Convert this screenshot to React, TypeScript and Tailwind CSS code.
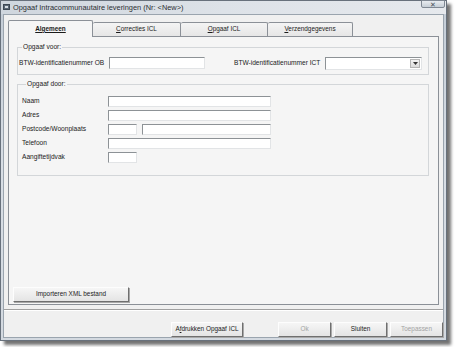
import React from "react";

const inputCls =
  "h-[11px] bg-white border border-t-[#8d9296] border-l-[#8d9296] border-b-[#e2e4e6] border-r-[#e2e4e6]";

function Btn({ w, label, disabled }: { w: string; label: React.ReactNode; disabled?: boolean }) {
  return (
    <div
      className={`${w} h-[15px] flex items-center justify-center bg-gradient-to-b from-[#f6f6f6] to-[#e4e4e4] border border-t-[#fdfdfd] border-l-[#fdfdfd] border-b-[#6f6f6f] border-r-[#6f6f6f] shadow-[1px_1px_0_#a9a9a9] text-[6.4px] leading-none ${
        disabled ? "text-[#a3a3a3]" : "text-[#1b1b1b]"
      }`}
    >
      {label}
    </div>
  );
}

function Row({ label, children }: { label: string; children: React.ReactNode }) {
  return (
    <div className="flex items-center h-[11px]">
      <div className="w-[86px] text-[6.6px] leading-none">{label}</div>
      {children}
    </div>
  );
}

export default function App() {
  return (
    <div className="w-[455px] h-[347px] bg-white font-['Liberation_Sans',Arial,sans-serif] text-[#1b1b1b]">
      <div className="w-[447px] h-[341px] flex flex-col bg-gradient-to-b from-[#c3ccd6] via-[#d8dee5] to-[#d3d9e0] border border-[#68717c] shadow-[4px_4px_3px_rgba(0,0,0,0.55)]">
        {/* title bar */}
        <div className="h-[13px] flex items-start pl-[2px] bg-gradient-to-r from-[#cfd6de] via-[#dde2e8] to-[#e6e9ed]">
          <div className="mt-[3px] w-[7px] h-[6px] bg-[#5d6a78] border border-[#3e4955] flex items-center justify-center">
            <div className="w-[3px] h-[2px] bg-[#d6dde4]" />
          </div>
          <div className="ml-[3px] mt-[3px] text-[7.4px] leading-none text-[#2b2f33]">
            Opgaaf Intracommunautaire leveringen (Nr: &lt;New&gt;)
          </div>
          <div className="flex-1" />
          <div className="mr-[1px] w-[24px] h-[8px] -mt-[1px] rounded-b-[2px] bg-gradient-to-b from-[#e8ecf0] to-[#c6ced6] border border-[#7f8893] flex items-center justify-center text-[7px] leading-none text-[#4a5159]">
            ✕
          </div>
        </div>
        {/* client */}
        <div className="flex-1 mx-[2px] mb-[2px] bg-[#f0f0f0] border border-[#9aa4ae] flex flex-col px-[4px] pt-[5px]">
          {/* tabs */}
          <div className="h-[16px] flex items-end text-[6.4px] leading-none">
            <div className="w-[85px] h-[17px] -mb-[1px] z-10 bg-[#f5f5f5] border border-b-0 border-[#8b9097] rounded-t-[2px] flex items-center justify-center font-bold">
              <span className="underline">Algemeen</span>
            </div>
            <div className="w-[88px] h-[14px] bg-gradient-to-b from-[#f4f4f4] to-[#e6e6e6] border border-b-0 border-l-0 border-[#8b9097] rounded-t-[2px] flex items-center justify-center">
              <span><span className="underline">C</span>orrecties ICL</span>
            </div>
            <div className="w-[87px] h-[14px] bg-gradient-to-b from-[#f4f4f4] to-[#e6e6e6] border border-b-0 border-l-0 border-[#8b9097] rounded-t-[2px] flex items-center justify-center">
              <span><span className="underline">O</span>pgaaf ICL</span>
            </div>
            <div className="w-[85px] h-[14px] bg-gradient-to-b from-[#f4f4f4] to-[#e6e6e6] border border-b-0 border-l-0 border-[#8b9097] rounded-t-[2px] flex items-center justify-center">
              <span><span className="underline">V</span>erzendgegevens</span>
            </div>
          </div>
          {/* panel */}
          <div className="h-[269px] bg-[#f5f5f5] border border-[#8b9097] flex flex-col pl-[8px] pr-[9px] pt-[6px] pb-[2px]">
            <fieldset className="border border-[#d3d6d9] px-[0px] pb-[5px]">
              <legend className="ml-[4px] px-[1px] text-[6.6px] leading-[8px]">Opgaaf voor:</legend>
              <div className="mt-[6px] flex items-center h-[12px] pl-[1px]">
                <div className="w-[90px] text-[6.6px] leading-none">BTW-identificatienummer OB</div>
                <div className={`w-[96px] h-[12px] ${inputCls}`} />
                <div className="ml-[29px] w-[91px] text-[6.6px] leading-none">BTW-identificatienummer ICT</div>
                <div className={`w-[97px] h-[13px] ${inputCls} flex justify-end items-center pr-[1px]`}>
                  <div className="w-[10px] h-[9px] bg-gradient-to-b from-[#f3f3f3] to-[#dcdcdc] border border-[#b5b5b5] flex items-center justify-center">
                    <svg width="5" height="3" viewBox="0 0 5 3"><path d="M0 0h5L2.5 3z" fill="#333" /></svg>
                  </div>
                </div>
              </div>
            </fieldset>
            <fieldset className="mt-[5px] border border-[#d3d6d9] pl-[4px] pb-[12px]">
              <legend className="ml-[4px] px-[1px] text-[6.6px] leading-[8px]">Opgaaf door:</legend>
              <div className="mt-[8px] flex flex-col gap-[3px]">
                <Row label="Naam">
                  <div className={`w-[163px] ${inputCls}`} />
                </Row>
                <Row label="Adres">
                  <div className={`w-[163px] ${inputCls}`} />
                </Row>
                <Row label="Postcode/Woonplaats">
                  <div className={`w-[29px] ${inputCls}`} />
                  <div className={`ml-[5px] w-[129px] ${inputCls}`} />
                </Row>
                <Row label="Telefoon">
                  <div className={`w-[163px] ${inputCls}`} />
                </Row>
                <Row label="Aangiftetijdvak">
                  <div className={`w-[29px] ${inputCls}`} />
                </Row>
              </div>
            </fieldset>
            <div className="mt-auto -ml-[4px]">
              <Btn w="w-[116px]" label="Importeren XML bestand" />
            </div>
          </div>
          {/* separator */}
          <div className="mt-[4px] -mx-[4px] h-[2px] border-t border-[#a0a0a0] border-b border-b-white" />
          {/* buttons */}
          <div className="mt-[11px] flex items-center">
            <div className="ml-[163px]">
              <Btn w="w-[72px]" label={<span>A<span className="underline">f</span>drukken Opgaaf ICL</span>} />
            </div>
            <div className="ml-[35px] flex gap-[3px]">
              <Btn w="w-[53px]" label="Ok" disabled />
              <Btn w="w-[53px]" label="Sluiten" />
              <Btn w="w-[53px]" label="Toepassen" disabled />
            </div>
          </div>
        </div>
      </div>
    </div>
  );
}
